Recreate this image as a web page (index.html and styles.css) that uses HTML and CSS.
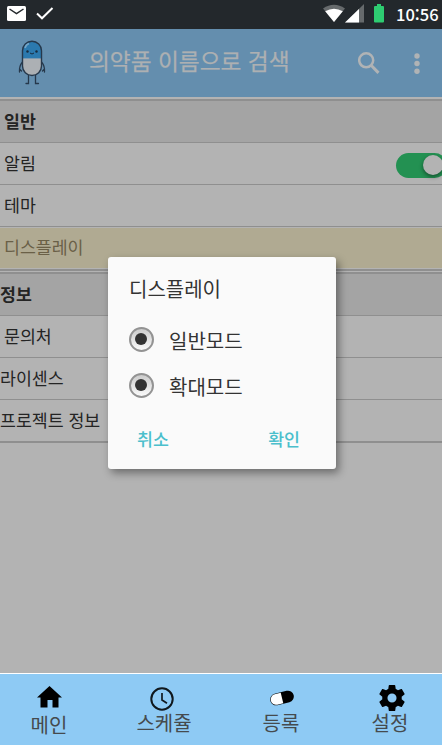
FILE: index.html
```
<!DOCTYPE html>
<html lang="ko">
<head>
<meta charset="utf-8">
<title>설정</title>
<link rel="stylesheet" href="styles.css">
</head>
<body>
<div class="app">
  <div class="status">
    <svg class="mail" width="19" height="15" viewBox="0 0 19 15"><rect width="19" height="15" rx="1.5" fill="#fff"/><path d="M2.500 3l7 4.700 7-4.700" fill="none" stroke="#23282c" stroke-width="1.500"/></svg>
    <svg class="check" width="18" height="13" viewBox="0 0 18 13"><path d="M1 6.500l5 4.800L16.500 1" fill="none" stroke="#fff" stroke-width="2"/></svg>
    <span class="grow"></span>
    <svg class="signals" width="41" height="19" viewBox="0 0 41 19"><path d="M0 4.500Q11 -3 22 4.500L11 18z" fill="#666a6c"/><path d="M2.200 7.300Q11 2.200 19.800 7.300L11 18z" fill="#fff"/><path d="M22 18.500L41 0v18.500z" fill="#666a6c"/><path d="M22 18.500L36 5v13.500z" fill="#fff"/></svg>
    <svg class="battery" width="10" height="19" viewBox="0 0 10 19"><path d="M3 0h4v2h2q1 0 1 1v14.500q0 1-1 1H1q-1 0-1-1V3q0-1 1-1h2z" fill="#2ecc71"/></svg>
    <span class="time">10:56</span>
  </div>
  <header class="header">
    <svg class="mascot" width="28" height="46" viewBox="0 0 28 46">
      <g fill="none" stroke="#26384b" stroke-width="1.300" stroke-linecap="round"><path d="M4.500 22Q1 26 1.500 32M1.500 29l2 2M23.500 22Q27 26 26.500 32M26.500 29l-2 2M10.500 35v8.500H8M17.500 35v8.500H20.500"/></g>
      <path d="M4.500 18.500v-8a9.500 9.500 0 0 1 19 0v8z" fill="#2b79ae"/><path d="M4.500 18.500h19V26a9.500 9.500 0 0 1-19 0z" fill="#acb0b4"/>
      <rect x="4.500" y="1.200" width="19" height="34.300" rx="9.500" fill="none" stroke="#26384b" stroke-width="1.400"/>
      <path d="M7 8Q8 4.500 11 3.500" stroke="#75a5c6" stroke-width="1.600" fill="none"/>
      <circle cx="9.500" cy="11.500" r="1.200" fill="#172b3e"/><circle cx="18.500" cy="11.500" r="1.200" fill="#172b3e"/><path d="M12 13q2 2 4 0" fill="none" stroke="#172b3e"/>
    </svg>
    <span class="search-text">의약품 이름으로 검색</span>
    <svg class="search" width="22" height="23" viewBox="0 0 22 23"><circle cx="8.200" cy="8.300" r="7" fill="none" stroke="#b0b3b5" stroke-width="2.500"/><path d="M13.300 13.500l7.200 7.400" stroke="#b0b3b5" stroke-width="3"/></svg>
    <svg class="more" width="6" height="22" viewBox="0 0 6 22" fill="#b0b3b5"><circle cx="3" cy="3" r="2.700"/><circle cx="3" cy="10.500" r="2.700"/><circle cx="3" cy="18.200" r="2.700"/></svg>
  </header>
  <main class="list">
    <section class="group">
      <h2 class="row title indent">일반</h2>
      <div class="row indent">알림<span class="toggle"><span class="knob"></span></span></div>
      <div class="row indent">테마</div>
      <div class="row indent selected">디스플레이</div>
    </section>
    <section class="group">
      <h2 class="row title">정보</h2>
      <div class="row indent">문의처</div>
      <div class="row">라이센스</div>
      <div class="row">프로젝트 정보</div>
    </section>
  </main>
  <nav class="nav">
    <div class="tab home"><svg width="25" height="22" viewBox="0 0 25 22"><path d="M12.500 0L25 11.500h-3.500V21.500h-6V14h-5v7.500h-7v-10H0z"/></svg><span>메인</span></div>
    <div class="tab schedule"><svg width="24" height="24" viewBox="0 0 24 24"><circle cx="12" cy="12" r="10.700" fill="none" stroke="#10181d" stroke-width="2"/><path d="M12 6v7l5 3.200" fill="none" stroke="#10181d" stroke-width="1.700"/></svg><span>스케쥴</span></div>
    <div class="tab register"><svg width="26" height="16" viewBox="0 0 26 16"><g transform="rotate(-14 13 8)"><rect x="1" y="2.200" width="24" height="11.600" rx="5.800" fill="#000"/><path d="M13 2.700H6.800a5.300 5.300 0 0 0 0 10.600H13z" fill="#fff"/></g></svg><span>등록</span></div>
    <div class="tab settings"><svg width="26" height="26" viewBox="2 2 20 20"><path d="M19.430 12.980c.04-.32.07-.64.07-.98s-.03-.66-.07-.98l2.110-1.650c.19-.15.24-.42.12-.64l-2-3.460c-.12-.22-.39-.3-.61-.22l-2.490 1c-.52-.4-1.080-.73-1.690-.98l-.38-2.650C14.460 2.180 14.250 2 14 2h-4c-.25 0-.46.18-.49.42l-.38 2.650c-.61.25-1.170.59-1.690.98l-2.490-1c-.23-.09-.49 0-.61.22l-2 3.460c-.13.22-.07.49.12.64l2.110 1.650c-.04.32-.07.65-.07.98s.03.66.07.98l-2.110 1.650c-.19.15-.24.42-.12.64l2 3.460c.12.22.39.3.61.22l2.490-1c.52.4 1.080.73 1.690.98l.38 2.650c.03.24.24.42.49.42h4c.25 0 .46-.18.49-.42l.38-2.650c.61-.25 1.170-.59 1.690-.98l2.490 1c.23.09.49 0 .61-.22l2-3.460c.12-.22.07-.49-.12-.64l-2.110-1.650zM12 15.500a3.500 3.500 0 1 1 0-7 3.500 3.500 0 0 1 0 7z"/></svg><span>설정</span></div>
  </nav>
  <div class="dialog">
    <div class="dialog-title">디스플레이</div>
    <div class="option"><span class="radio"></span>일반모드</div>
    <div class="option"><span class="radio"></span>확대모드</div>
    <div class="actions"><span>취소</span><span>확인</span></div>
  </div>
</div>
</body>
</html>
```
FILE: styles.css
```
* { box-sizing: border-box; }
body { margin: 0; font-family: "Noto Sans CJK KR", sans-serif; }
svg { display: block; flex: none; }
.app { position: relative; width: 442px; height: 745px; overflow: hidden; display: flex; flex-direction: column; background: #b3b3b3; }
.status { height: 29px; flex: none; display: flex; align-items: flex-start; background: #23282c; padding: 0 6px 0 7px; }
.mail { margin-top: 6px; }
.check { margin: 7px 0 0 10px; }
.grow { flex: 1; }
.signals { margin: 4px 10px 0 0; }
.battery { margin: 4px 12px 0 0; }
.time { width: 40px; color: #fff; font-size: 16.500px; line-height: 28px; font-weight: 500; white-space: nowrap; }
.header { height: 68px; flex: none; display: flex; align-items: flex-start; background: #648eae; padding-left: 18px; }
.mascot { margin-top: 11px; }
.search-text { width: 269px; margin-left: 43px; font-size: 22.700px; line-height: 64px; color: #adb0b2; -webkit-text-stroke: .25px #adb0b2; white-space: nowrap; }
.search { margin-top: 23px; }
.more { margin: 24px 0 0 34px; }
.list { flex: 1; padding-top: 2px; }
.group { border-top: 2px solid #8f8f8f; border-bottom: 2px solid #8f8f8f; margin-bottom: 1px; }
.row { position: relative; height: 42px; margin: 0; border-bottom: 1px solid #8f8f8f; font-size: 17.300px; line-height: 39px; font-weight: 400; color: #242424; white-space: nowrap; }
.row:last-child { height: 41px; border-bottom: 0; }
.title { background: #a4a4a4; font-weight: 700; }
.indent { padding-left: 4px; }
.row.selected { height: 42px; line-height: 37px; background: #b0aa92; color: #6a6047; border-top: 1px solid #b3b3b3; border-bottom: 1px solid #b3b3b3; }
.toggle { position: absolute; left: 396px; top: 10px; width: 51px; height: 25px; border-radius: 13px; background: #239152; }
.knob { position: absolute; left: 27px; top: 2px; width: 20px; height: 20px; border-radius: 50%; background: #b3b3b3; box-shadow: 0 2px 4px rgba(0,0,0,.45); }
.nav { height: 72px; flex: none; display: grid; grid-template-columns: 98px 132px 102px 110px; background: #8ecaf4; border-top: 1px solid #fff; }
.tab { display: flex; flex-direction: column; align-items: center; font-size: 20px; line-height: 28px; color: #454a4e; white-space: nowrap; }
.home svg { margin: 12px 0 3px; }
.schedule svg { margin: 13px 4px 0 0; }
.schedule span { margin-top: -2px; }
.register svg { margin: 16px 0 3px 2px; }
.settings svg { margin: 11px 0 0 9px; }
.settings span { margin: -2px 0 0 6px; }
.dialog { position: absolute; left: 108px; top: 257px; width: 228px; height: 212px; padding: 17px 21px 0; background: #fafafa; border-radius: 3px; box-shadow: 3px 4px 9px rgba(0,0,0,.4); color: #333; font-size: 20px; }
.dialog-title { height: 44px; line-height: 30px; }
.option { height: 46px; display: flex; align-items: center; line-height: 46px; }
.radio { position: relative; width: 25px; height: 25px; margin: -3px 15px 0 0; border: 2px solid #939393; border-radius: 50%; background: linear-gradient(#ccc, #fafafa); }
.radio::after { content: ""; position: absolute; left: 4px; top: 4px; width: 12px; height: 12px; border-radius: 50%; background: #333; }
.actions { display: flex; justify-content: space-between; padding: 15px 15px 0 8px; font-size: 17.300px; line-height: 28px; font-weight: 500; color: #4bbfcc; }
```
